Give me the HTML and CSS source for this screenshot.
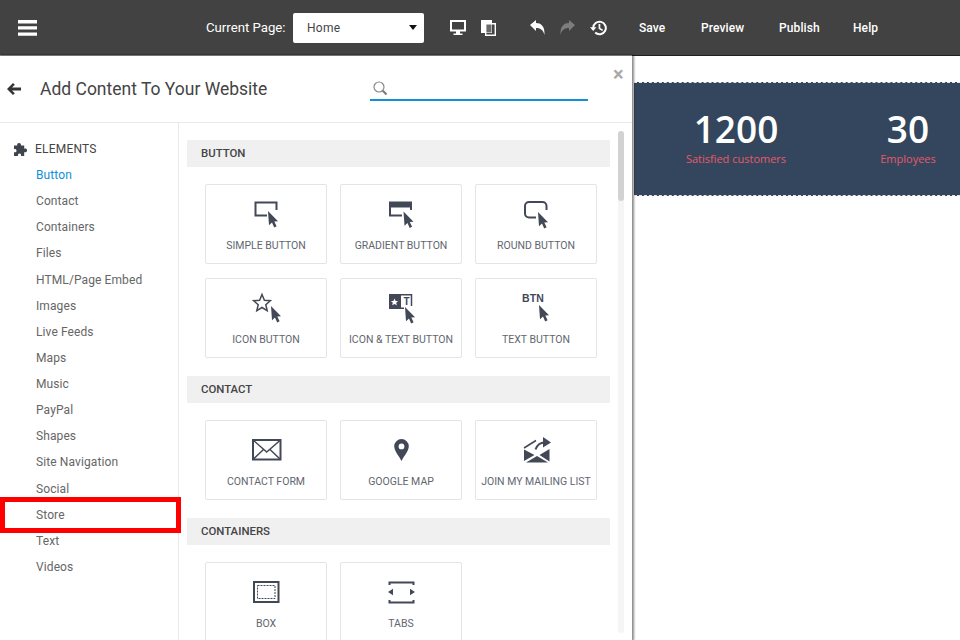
FILE: index.html
```html
<!DOCTYPE html>
<html lang="en">
<head>
<meta charset="utf-8">
<title>Add Content To Your Website</title>
<link rel="stylesheet" href="styles.css">
</head>
<body>
<svg class="defs" width="0" height="0" aria-hidden="true"><defs>
  <path id="cur" d="M0 0L10 10.200L6.300 10.400L8.600 15.300L6.200 16.400L4 11.400L1 14.200Z"/>
</defs></svg>
<header class="topbar">
  <svg class="burger" width="19" height="16" viewBox="0 0 19 16"><path d="M0 0h19v3.400H0zM0 6.200h19v3.400H0zM0 12.400h19v3.400H0z"/></svg>
  <span class="page-label">Current Page:</span>
  <div class="page-select"><span>Home</span><i class="caret"></i></div>
  <div class="tools view-tools">
    <svg width="16" height="16" viewBox="0 0 16 16"><path fill-rule="evenodd" d="M0 0h16v11.500H0zM2 2v7.500h12V2z"/><path d="M6 11h4v2.500h2.500V15h-9v-1.500H6z"/></svg>
    <svg width="15" height="16" viewBox="0 0 15 16"><path d="M0 0h11v13H0z"/><path d="M4 3.500h6.500v9H4z" fill="#6a6a6a"/><path d="M4.700 3.700h9.600v11.600H4.700z" fill="none" stroke="#fff" stroke-width="1.400"/></svg>
  </div>
  <div class="tools hist-tools">
    <svg width="15" height="15" viewBox="0 0 15 15"><path d="M0 5L6 0v3c5 0 9 3 8.500 12C13 9.500 10 8 6 8v3z"/></svg>
    <svg class="off" width="15" height="15" viewBox="0 0 15 15"><path d="M15 5L9 0v3C4 3 0 6 .5 15 2 9.500 5 8 9 8v3z"/></svg>
    <svg width="17" height="16" viewBox="0 0 17 16"><path d="M3.200 8a6.300 6.300 0 1 1 2 4.600" fill="none" stroke="#fff" stroke-width="2"/><path d="M0 7.200h6.400L3.200 11zM8.600 4h1.700v4l2.800 1.700-.9 1.300-3.600-2.200z"/></svg>
  </div>
  <nav class="actions"><a>Save</a><a>Preview</a><a>Publish</a><a>Help</a></nav>
</header>
<div class="workspace">
  <section class="panel">
    <div class="panel-head">
      <svg class="back" width="14" height="12" viewBox="0 0 14 12"><path d="M6 0l1.800 1.800-2.800 2.700H14v3H5l2.800 2.700L6 12 0 6z"/></svg>
      <h1>Add Content To Your Website</h1>
      <div class="search">
        <svg width="15" height="15" viewBox="0 0 15 15"><circle cx="6" cy="6" r="5" fill="none" stroke="#8a8a8a" stroke-width="1.200"/><path d="M9.800 9.800l3.700 3.700" stroke="#777" stroke-width="2"/></svg>
      </div>
      <span class="close">×</span>
    </div>
    <div class="panel-body">
      <aside class="sidebar">
        <div class="side-title">
          <svg width="13" height="13" viewBox="0 0 13 13"><path d="M5 0c1.600 0 2.200 1 1.900 2.600h3.300v3.200C11.800 5.200 13 5.800 13 7.400s-1.200 2.100-2.800 1.600V13H7c.5-1.500-.2-2.500-1.500-2.500S3.600 11.500 4 13H0V9.200c1.300.5 2.500-.1 2.500-1.500S1.400 5.800 0 6.200V2.600h3.300C2.900 1 3.500 0 5 0z"/></svg>
          <span>ELEMENTS</span>
        </div>
        <ul class="side-list">
          <li class="active">Button</li><li>Contact</li><li>Containers</li><li>Files</li><li>HTML/Page Embed</li><li>Images</li><li>Live Feeds</li><li>Maps</li><li>Music</li><li>PayPal</li><li>Shapes</li><li>Site Navigation</li><li>Social</li><li>Store</li><li>Text</li><li>Videos</li>
        </ul>
        <div class="highlight"></div>
      </aside>
      <div class="catalog">
        <div class="sections">
          <section class="group">
            <h2>BUTTON</h2>
            <div class="cards">
              <div class="card"><svg viewBox="0 0 40 32"><path class="line" d="M21 17.500H9.500V4.500H30.500V12"/><use href="#cur" x="22" y="13"/></svg><span>SIMPLE BUTTON</span></div>
              <div class="card"><svg viewBox="0 0 40 32"><path d="M8 3.500h23v6H8z"/><path class="line" d="M21 17.500H9V8M30 8v4"/><use href="#cur" x="22.500" y="13.500"/></svg><span>GRADIENT BUTTON</span></div>
              <div class="card"><svg viewBox="0 0 40 32"><path class="line" d="M20 19.500h-7a4 4 0 0 1-4-4V8a4 4 0 0 1 4-4h13.500a4 4 0 0 1 4 4v4"/><use href="#cur" x="22" y="14"/></svg><span>ROUND BUTTON</span></div>
              <div class="card"><svg viewBox="0 0 40 32"><path class="line thin" d="M16 2.500l2.400 5.700 6 .5-4.600 4 1.400 6L16 15.500l-5.200 3.200 1.400-6-4.600-4 6-.5z"/><use href="#cur" x="25" y="14"/></svg><span>ICON BUTTON</span></div>
              <div class="card"><svg viewBox="0 0 40 32"><path d="M8 2h12v15H8z"/><path class="line thin" d="M20 2.700h10.500V14M20 16.300h3"/><path class="cut" d="M13.500 6.500l1.100 2.400 2.500.2-1.900 1.700.6 2.500-2.300-1.400-2.300 1.400.6-2.500-1.900-1.700 2.500-.2z"/><text class="mini" x="25.500" y="13" text-anchor="middle">T</text><use href="#cur" x="24" y="15"/></svg><span>ICON &amp; TEXT BUTTON</span></div>
              <div class="card"><svg viewBox="0 0 40 32"><text class="btn-text" x="17" y="10" text-anchor="middle">BTN</text><use href="#cur" x="23" y="13"/></svg><span>TEXT BUTTON</span></div>
            </div>
          </section>
          <section class="group">
            <h2>CONTACT</h2>
            <div class="cards">
              <div class="card"><svg viewBox="0 0 40 32"><path class="line" d="M7 6h27.500v19.500H7z"/><path class="line thin" d="M7 6l13.700 12L34.500 6M7 25.500l10.500-10M34.500 25.500L24 15.500"/></svg><span>CONTACT FORM</span></div>
              <div class="card"><svg viewBox="0 0 40 32"><path fill-rule="evenodd" d="M20.500 5a7.300 7.300 0 0 1 7.300 7.300c0 5-5 10-7.300 14.700-2.300-4.700-7.300-9.700-7.300-14.700A7.300 7.300 0 0 1 20.500 5zm0 4.500a2.900 2.900 0 1 0 0 5.800 2.900 2.900 0 0 0 0-5.800z"/></svg><span>GOOGLE MAP</span></div>
              <div class="card"><svg viewBox="0 0 40 32"><path d="M8 15.500V27l10.500-6zM10 28.500h22L21 22zM33.500 15V27.500L23.500 21z"/><path class="line thin" d="M8 14L20 6.500"/><path d="M27 3l8 5.500-8 5z"/><path class="line" d="M19.500 15.500c1.500-4 4-7 9-7"/></svg><span>JOIN MY MAILING LIST</span></div>
            </div>
          </section>
          <section class="group">
            <h2>CONTAINERS</h2>
            <div class="cards">
              <div class="card"><svg viewBox="0 0 40 32"><path class="line" d="M8 6h24.500v20H8z"/><path class="line dash" d="M11.500 9.500h17.500v13H11.500z"/></svg><span>BOX</span></div>
              <div class="card"><svg viewBox="0 0 40 32"><path class="line" d="M8.500 9V6.500h24V9M8.500 24v2.500h24V24"/><path d="M7 16l5-3.200v6.400zM34 16l-5-3.200v6.400z"/></svg><span>TABS</span></div>
            </div>
          </section>
        </div>
        <div class="scrollbar"><div class="thumb"></div></div>
      </div>
    </div>
  </section>
  <main class="canvas">
    <div class="stats">
      <div class="stat"><strong>1200</strong><span>Satisfied customers</span></div>
      <div class="stat"><strong>30</strong><span>Employees</span></div>
    </div>
  </main>
</div>
</body>
</html>
```

FILE: styles.css
```css
* { box-sizing: border-box; }
html, body { margin: 0; height: 640px; overflow: hidden; background: #fff; }
body { font-family: Roboto, "Liberation Sans", sans-serif; color: #444; }
.defs { position: absolute; }

.topbar {
  height: 56px;
  display: flex;
  align-items: center;
  background: #424242;
  border-bottom: 1px solid #1f1f1f;
  color: #fff;
}
.topbar svg { fill: #fff; flex: none; }
.burger { margin-left: 18px; }
.page-label { margin-left: 169px; font-size: 13.200px; width: 87px; }
.page-select {
  width: 131px;
  height: 30px;
  display: flex;
  align-items: center;
  justify-content: space-between;
  padding: 0 7px 0 14px;
  background: #fff;
  border-radius: 2px;
  color: #444;
  font-size: 12px;
  letter-spacing: .3px;
}
.caret { width: 0; height: 0; border: 4px solid transparent; border-top: 5px solid #111; border-bottom: 0; }
.tools { display: flex; align-items: center; }
.view-tools { margin-left: 26px; gap: 15px; }
.hist-tools { margin-left: 34px; gap: 15px; }
.topbar .off { fill: #7d7d7d; }
.actions { display: flex; margin-left: 32px; font-size: 12px; font-weight: 500; letter-spacing: .1px; }
.actions a:nth-child(1) { width: 62px; }
.actions a:nth-child(2) { width: 78px; }
.actions a:nth-child(3) { width: 74px; }

.workspace { display: flex; height: 584px; }
.panel {
  position: relative;
  width: 632px;
  flex: none;
  background: #fff;
  box-shadow: 1px 0 2px 1px rgba(0,0,0,.45), 0 -1px 0 #a8a8a8;
  display: flex;
  flex-direction: column;
  z-index: 1;
}
.panel-head {
  height: 67px;
  flex: none;
  display: flex;
  align-items: center;
  border-bottom: 1px solid #e9e9e9;
  padding-bottom: 2px;
}
.back { fill: #333; margin: 2px 0 0 7px; }
h1 { margin: 2px 0 0 19px; width: 330px; font-size: 17.500px; font-weight: 400; color: #444; }
.search {
  width: 218px;
  height: 28px;
  margin-bottom: 3px;
  padding: 8px 0 0 3px;
  border-bottom: 2px solid #1190d8;
}
.close { position: absolute; top: 8px; left: 613px; font-size: 20px; line-height: 20px; font-weight: 700; color: #a9a9a9; }

.panel-body { flex: 1; display: flex; min-height: 0; }
.sidebar {
  position: relative;
  width: 179px;
  flex: none;
  padding-top: 13px;
  border-right: 1px solid #e9e9e9;
}
.side-title { display: flex; align-items: center; height: 26px; padding-left: 14px; gap: 8px; font-size: 12px; color: #444; letter-spacing: .2px; }
.side-title svg { fill: #3f434b; }
.side-list { list-style: none; margin: 0; padding: 0; }
.side-list li { height: 26.130px; line-height: 27px; padding-left: 36px; font-size: 12px; color: #666; letter-spacing: .1px; }
.side-list .active { color: #1190d8; }
.highlight {
  position: absolute;
  left: 0;
  top: 374px;
  width: 181px;
  height: 36px;
  border: 5px solid #f00;
  z-index: 2;
}

.catalog { flex: 1; display: flex; min-width: 0; overflow: hidden; padding-left: 8px; }
.sections { width: 423px; padding-top: 17px; flex: none; }
.group { margin-bottom: 18px; }
h2 {
  margin: 0;
  height: 27px;
  line-height: 27px;
  padding-left: 14px;
  background: #f0f0f0;
  font-size: 11.400px;
  font-weight: 500;
  color: #444;
}
.cards { display: grid; grid-template-columns: repeat(3, 122px); gap: 14px 13px; padding: 17px 0 0 18px; }
.card {
  height: 80px;
  display: flex;
  flex-direction: column;
  align-items: center;
  border: 1px solid #e4e4e4;
  border-radius: 2px;
  font-size: 10.500px;
  color: #62666f;
}
.card svg { width: 40px; height: 32px; margin-top: 13px; fill: #434857; flex: none; overflow: visible; }
.card span { margin-top: 9px; line-height: 14px; white-space: nowrap; }
.line { fill: none; stroke: #434857; stroke-width: 2; }
.thin { stroke-width: 1.500; }
.dash { stroke-width: 1; stroke-dasharray: 2 1; }
.cut { fill: #fff; }
.mini { font: 700 10px Roboto, sans-serif; fill: #434857; }
.btn-text { font: 700 10.500px "Liberation Sans", sans-serif; fill: #434857; letter-spacing: .2px; }
.scrollbar { width: 6px; margin: 8px 0 7px 8px; flex: none; background: #f5f5f5; border-radius: 3px; }
.thumb { height: 70px; background: #d2d2d2; border-radius: 3px; }

.canvas { flex: 1; min-width: 0; overflow: hidden; padding: 26px 0 0 2px; }
.stats {
  height: 114px;
  display: grid;
  grid-template-columns: repeat(2, 172px);
  padding: 0 0 0 16px;
  background: #34465d;
  border-top: 1px dashed #e8e8e8;
  border-bottom: 1px dashed #e8e8e8;
  font-family: "Open Sans", sans-serif;
}
.stat { display: flex; flex-direction: column; align-items: center; padding-top: 24px; }
.stat strong { font-size: 37px; line-height: 44px; font-weight: 600; color: #fff; }
.stat span { font-size: 11px; line-height: 16px; font-weight: 500; color: #e8586a; white-space: nowrap; }
```
